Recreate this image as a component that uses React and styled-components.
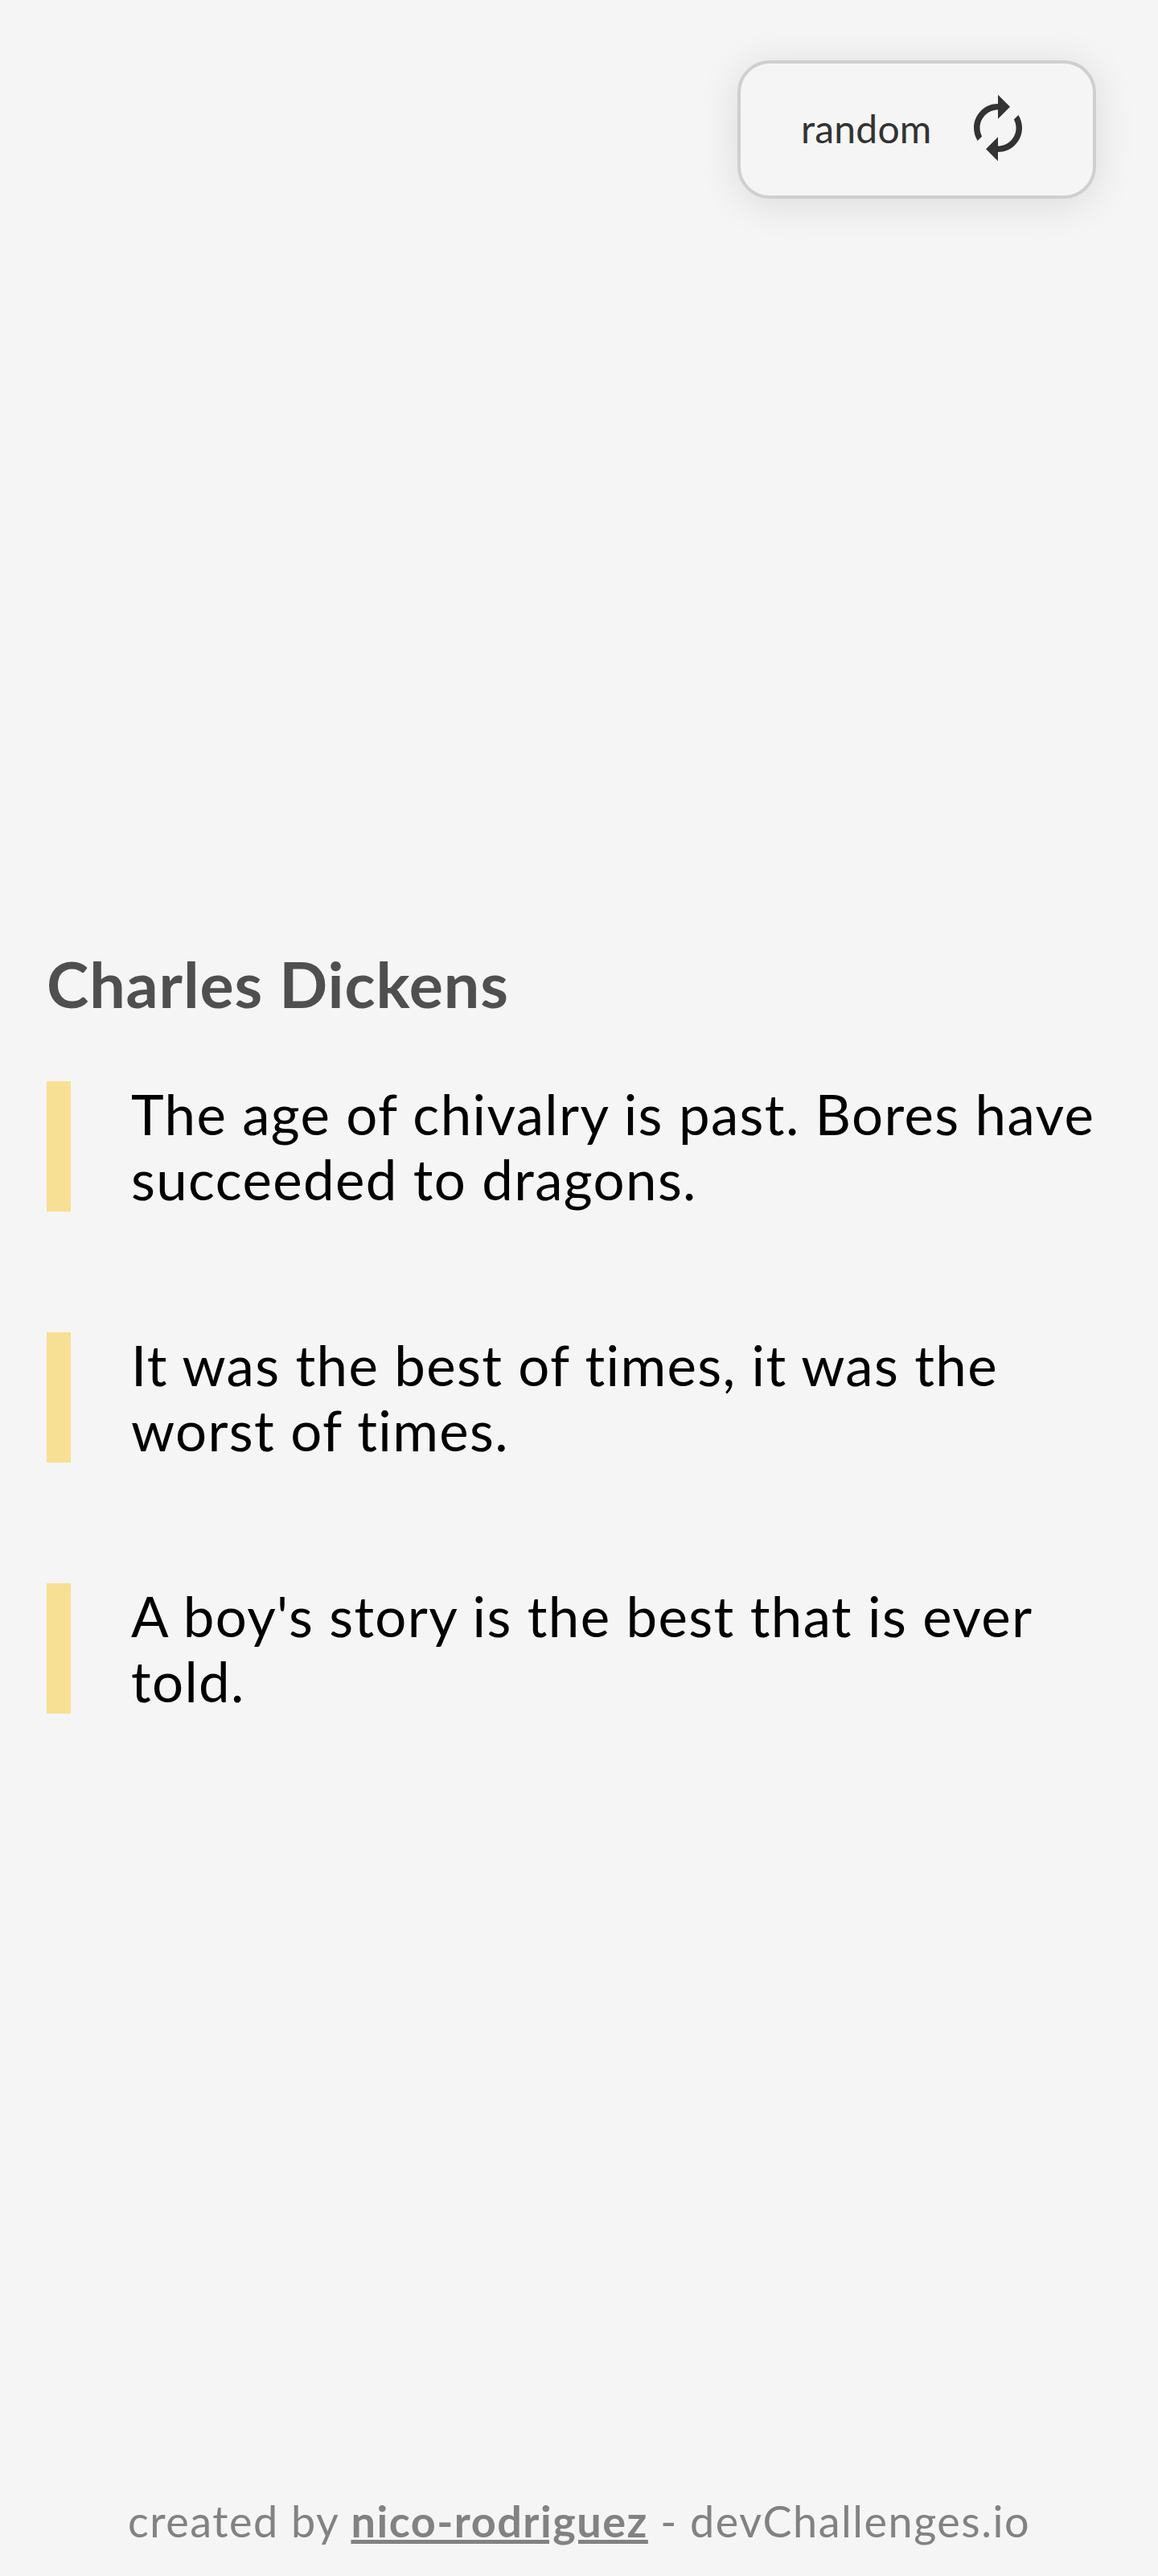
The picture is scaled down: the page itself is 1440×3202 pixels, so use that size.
import React from "react";
import styled, { createGlobalStyle } from "styled-components";

const GlobalStyle = createGlobalStyle`
  * {
    box-sizing: border-box;
  }
  body {
    margin: 0;
    background-color: #f5f5f5;
    font-family: "Lato", "Open Sans", sans-serif;
  }
`;

const Page = styled.div`
  display: flex;
  flex-direction: column;
  height: 3202px;
  padding: 75px 77px 0 58px;
`;

const Toolbar = styled.header`
  display: flex;
  justify-content: flex-end;
`;

const RandomButton = styled.button`
  display: flex;
  align-items: center;
  justify-content: space-between;
  width: 446px;
  height: 172px;
  padding: 0 73px 4px 75px;
  background-color: #f5f5f5;
  border: 4px solid #cfcfcf;
  border-radius: 40px;
  box-shadow: 0 6px 50px rgba(0, 0, 0, 0.11);
  font-family: inherit;
  font-size: 48px;
  letter-spacing: 0.2px;
  color: #333333;
  svg {
    width: 90px;
    height: 90px;
    fill: #333333;
  }
`;

const Quotes = styled.main`
  margin-top: 931px;
`;

const Author = styled.h1`
  margin: 0 0 76px;
  font-size: 79px;
  line-height: 90px;
  letter-spacing: 0.9px;
  font-weight: 700;
  color: #4f4f4f;
`;

const Quote = styled.blockquote`
  margin: 0 0 150px;
  padding-left: 75px;
  border-left: 30px solid #f7df94;
  font-size: 69px;
  line-height: 81px;
  letter-spacing: 1.36px;
  color: #000000;
`;

const Footer = styled.footer`
  margin-top: auto;
  margin-right: -19px;
  padding-bottom: 38px;
  text-align: center;
  font-size: 54px;
  line-height: 60px;
  letter-spacing: 1.5px;
  color: #828282;
  a {
    font-weight: 700;
    color: inherit;
  }
`;

const quotes = [
  "The age of chivalry is past. Bores have succeeded to dragons.",
  "It was the best of times, it was the worst of times.",
  "A boy's story is the best that is ever told.",
];

export default function App() {
  return (
    <Page>
      <GlobalStyle />
      <Toolbar>
        <RandomButton>
          random
          <svg viewBox="0 0 24 24">
            <path d="M12 6v3l4-4-4-4v3c-4.42 0-8 3.58-8 8 0 1.57.46 3.03 1.24 4.26L6.7 14.8c-.45-.83-.7-1.79-.7-2.8 0-3.31 2.69-6 6-6zm6.76 1.74L17.3 9.2c.44.84.7 1.79.7 2.8 0 3.31-2.69 6-6 6v-3l-4 4 4 4v-3c4.42 0 8-3.58 8-8 0-1.57-.46-3.03-1.24-4.26z" />
          </svg>
        </RandomButton>
      </Toolbar>
      <Quotes>
        <Author>Charles Dickens</Author>
        {quotes.map((quote) => (
          <Quote key={quote}>{quote}</Quote>
        ))}
      </Quotes>
      <Footer>
        created by <a href="#profile">nico-rodriguez</a> - devChallenges.io
      </Footer>
    </Page>
  );
}
